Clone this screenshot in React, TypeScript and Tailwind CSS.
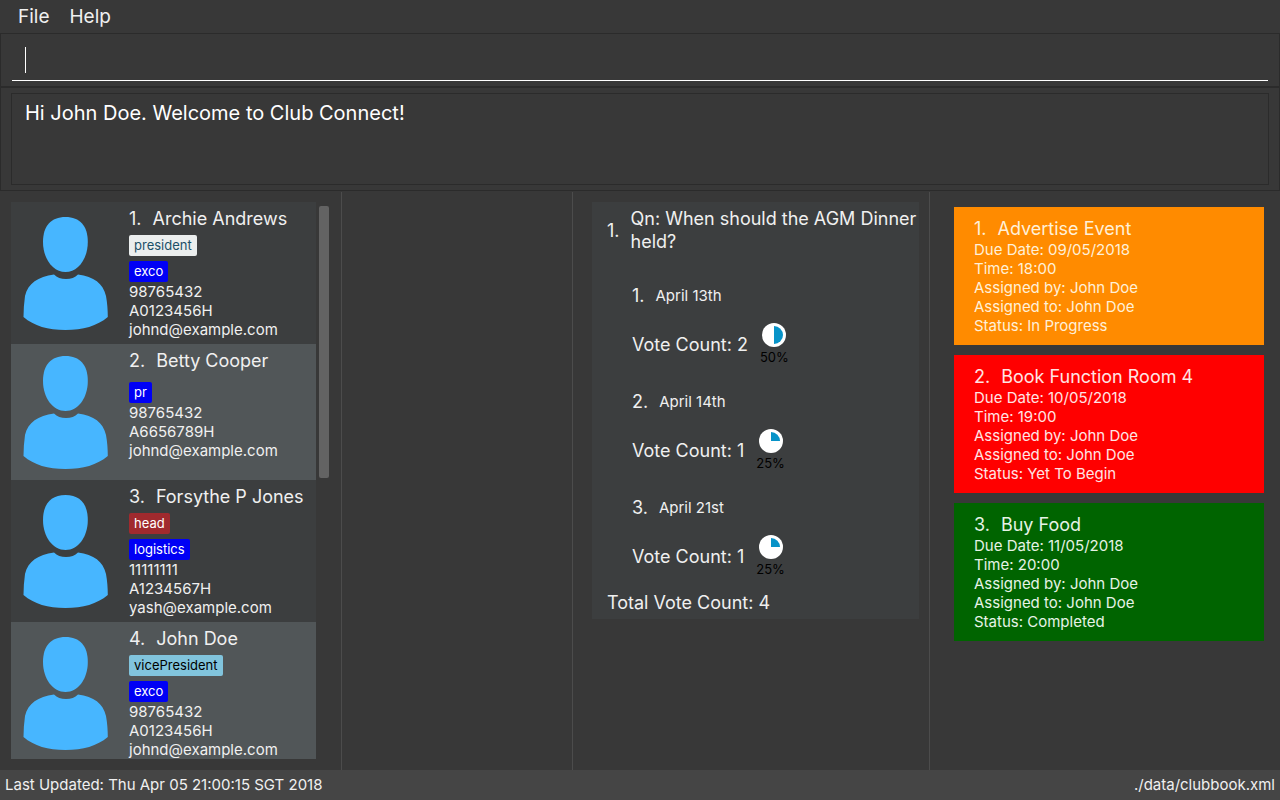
type Tag = { text: string; style: string };
type Member = { name: string; role?: Tag; group: string; phone: string; matric: string; email: string };
type Task = { name: string; date: string; time: string; status: string; style: string };

const members: Member[] = [
  {
    name: "Archie Andrews",
    role: { text: "president", style: "bg-[#ebeeee] text-[#1d5068]" },
    group: "exco",
    phone: "98765432",
    matric: "A0123456H",
    email: "johnd@example.com",
  },
  { name: "Betty Cooper", group: "pr", phone: "98765432", matric: "A6656789H", email: "johnd@example.com" },
  {
    name: "Forsythe P Jones",
    role: { text: "head", style: "bg-[#a02a2e] text-white" },
    group: "logistics",
    phone: "11111111",
    matric: "A1234567H",
    email: "yash@example.com",
  },
  {
    name: "John Doe",
    role: { text: "vicePresident", style: "bg-[#81c4dd] text-black" },
    group: "exco",
    phone: "98765432",
    matric: "A0123456H",
    email: "johnd@example.com",
  },
];

const options = [
  { label: "April 13th", votes: 2, percent: 50 },
  { label: "April 14th", votes: 1, percent: 25 },
  { label: "April 21st", votes: 1, percent: 25 },
];

const tasks: Task[] = [
  { name: "Advertise Event", date: "09/05/2018", time: "18:00", status: "In Progress", style: "bg-[#ff8b00] text-[#fff0d8]" },
  { name: "Book Function Room 4", date: "10/05/2018", time: "19:00", status: "Yet To Begin", style: "bg-[#ff0000] text-[#ffe4e4]" },
  { name: "Buy Food", date: "11/05/2018", time: "20:00", status: "Completed", style: "bg-[#006400] text-[#e6f3e6]" },
];

function Avatar() {
  return (
    <svg viewBox="0 0 85 113" className="h-[113px] w-[85px] shrink-0" fill="#47b6ff" aria-hidden="true">
      <path d="M42.500 0C57 0 64.800 9 64.800 25C64.800 42 55 55 42.500 55C30 55 20 42 20 25C20 9 28 0 42.500 0Z" />
      <path d="M31 57.500C34 60.500 38 62 43 62C48 62 52 60.500 55 57.500C71 60 80 66 83 79C84.300 86 84.800 93 84.800 100C74 109 60 113 42.500 113C25 113 11 109 .500 100C.500 93 1 86 2 79C5 66 15 60 31 57.500Z" />
    </svg>
  );
}

function TagLabel({ text, style }: Tag) {
  return <span className={`rounded-xs px-[5px] text-[13px] leading-[21px] ${style}`}>{text}</span>;
}

function MemberCard({ member, index }: { member: Member; index: number }) {
  return (
    <li
      className={`flex min-h-[136px] shrink-0 items-center gap-[21px] py-[5px] pl-3 ${index % 2 ? "bg-[#515658]" : "bg-[#3c3e3f]"}`}
    >
      <Avatar />
      <div className="flex min-w-0 flex-col items-start self-stretch text-[15px] leading-[19px] whitespace-nowrap">
        <h2 className="flex gap-[11px] text-[18px] leading-[23px]">
          <span>{index + 1}.</span>
          <span>{member.name}</span>
        </h2>
        <div className="flex flex-col items-start gap-[5px] pt-[5px]">
          {member.role ? <TagLabel {...member.role} /> : <span />}
          <TagLabel text={member.group} style="bg-[#0000f5] text-white" />
        </div>
        <span>{member.phone}</span>
        <span>{member.matric}</span>
        <span>{member.email}</span>
      </div>
    </li>
  );
}

function Pie({ percent }: { percent: number }) {
  const angle = (percent / 100) * 2 * Math.PI;
  const x = 12 + 9 * Math.sin(angle);
  const y = 12 - 9 * Math.cos(angle);
  return (
    <svg viewBox="0 0 24 24" className="size-6" aria-hidden="true">
      <circle cx="12" cy="12" r="12" fill="#fff" />
      <path d={`M12 12V3A9 9 0 0 1 ${x} ${y}Z`} fill="#0793c8" />
    </svg>
  );
}

function Poll() {
  return (
    <article className="bg-[#3c3e3f] py-[5px] pl-[15px] text-[18px] leading-[23px] whitespace-nowrap">
      <h2 className="flex items-center gap-[11px]">
        <span>1.</span>
        <span>
          Qn: When should the AGM Dinner
          <br />
          held?
        </span>
      </h2>
      <ol className="flex flex-col gap-[25px] pt-[31px] pl-[25px]">
        {options.map((option, i) => (
          <li key={option.label} className="flex flex-col gap-4">
            <div className="flex items-center gap-[11px]">
              <span>{i + 1}.</span>
              <span className="text-[15px]">{option.label}</span>
            </div>
            <div className="flex items-center gap-3">
              <span>Vote Count: {option.votes}</span>
              <div className="flex flex-col items-center gap-0.5 text-[13px] leading-4 text-black">
                <Pie percent={option.percent} />
                <span>{option.percent}%</span>
              </div>
            </div>
          </li>
        ))}
      </ol>
      <p className="pt-3.5">Total Vote Count: 4</p>
    </article>
  );
}

function TaskCard({ task, index }: { task: Task; index: number }) {
  return (
    <li className={`px-5 py-2.5 text-[15px] leading-[19px] ${task.style}`}>
      <h2 className="flex gap-[11px] text-[18px] leading-[23px]">
        <span>{index + 1}.</span>
        <span>{task.name}</span>
      </h2>
      <p>Due Date: {task.date}</p>
      <p>Time: {task.time}</p>
      <p>Assigned by: John Doe</p>
      <p>Assigned to: John Doe</p>
      <p>Status: {task.status}</p>
    </li>
  );
}

export default function App() {
  return (
    <div className="flex h-screen flex-col overflow-hidden bg-[#383838] font-['Inter','Liberation_Sans',sans-serif] text-[#f0f0f0]">
      <nav className="flex h-[33px] shrink-0 items-center gap-5 px-[18px] text-[19px] leading-[23px]">
        <button type="button">File</button>
        <button type="button">Help</button>
      </nav>

      <div className="shrink-0 border border-b-2 border-[#2b2b2b] px-[11px] pb-[5px]">
        <label className="flex h-[47px] items-center border-b border-white pt-1.5 pl-[13px]">
          <span className="h-[26px] w-px bg-white" />
          <input
            type="text"
            aria-label="Command"
            className="min-w-0 flex-1 bg-transparent text-[20px] text-white caret-transparent outline-none"
          />
        </label>
      </div>

      <div className="shrink-0 border border-t-0 border-[#2b2b2b] px-2.5 py-[5px]">
        <output className="block h-[92px] border border-[#2b2b2b] px-[13px] py-[7px] text-[20px] leading-6 text-white">
          Hi John Doe. Welcome to Club Connect!
        </output>
      </div>

      <main className="grid min-h-0 flex-1 grid-cols-[342fr_231fr_357fr_350fr] divide-x divide-[#4c4c4c] pt-px">
        <section aria-label="Members" className="flex min-h-0 min-w-0 gap-[3px] pt-2.5 pr-3 pb-[11px] pl-[11px]">
          <ul className="flex min-w-0 flex-1 flex-col overflow-hidden">
            {members.map((member, i) => (
              <MemberCard key={member.name} member={member} index={i} />
            ))}
          </ul>
          <div className="mt-1 h-[272px] w-2.5 shrink-0 rounded-xs bg-[#636363]" />
        </section>
        <section aria-label="Details" />
        <section aria-label="Polls" className="min-w-0 pt-2.5 pr-2.5 pl-[19px]">
          <Poll />
        </section>
        <section aria-label="Tasks" className="min-w-0 pt-[15px] pr-4 pl-6">
          <ol className="flex flex-col gap-2.5">
            {tasks.map((task, i) => (
              <TaskCard key={task.name} task={task} index={i} />
            ))}
          </ol>
        </section>
      </main>

      <footer className="flex h-[30px] shrink-0 items-center justify-between bg-[#454545] px-[5px] pt-px text-[15px]">
        <span>Last Updated: Thu Apr 05 21:00:15 SGT 2018</span>
        <span>./data/clubbook.xml</span>
      </footer>
    </div>
  );
}
